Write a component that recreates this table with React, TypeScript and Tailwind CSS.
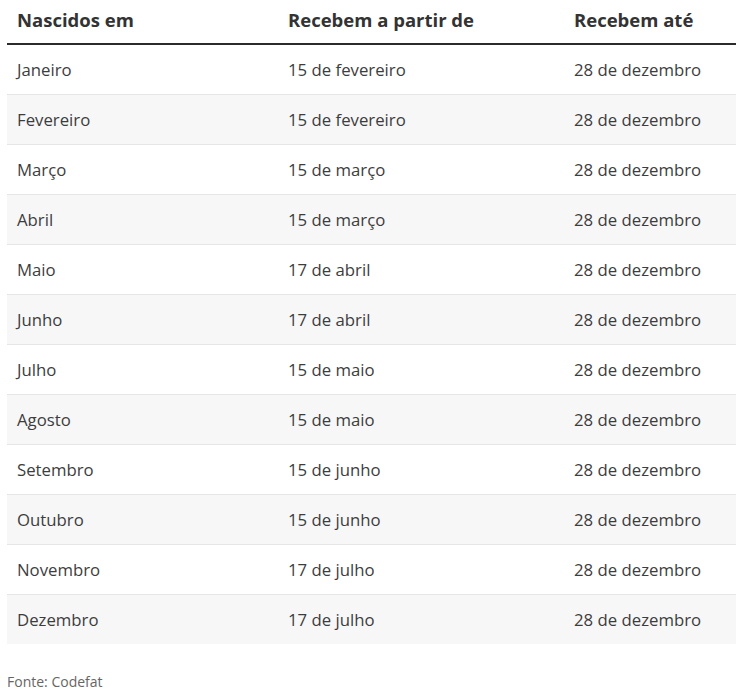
import React from 'react'

const ROWS: [string, string, string][] = [
  ['Janeiro', '15 de fevereiro', '28 de dezembro'],
  ['Fevereiro', '15 de fevereiro', '28 de dezembro'],
  ['Março', '15 de março', '28 de dezembro'],
  ['Abril', '15 de março', '28 de dezembro'],
  ['Maio', '17 de abril', '28 de dezembro'],
  ['Junho', '17 de abril', '28 de dezembro'],
  ['Julho', '15 de maio', '28 de dezembro'],
  ['Agosto', '15 de maio', '28 de dezembro'],
  ['Setembro', '15 de junho', '28 de dezembro'],
  ['Outubro', '15 de junho', '28 de dezembro'],
  ['Novembro', '17 de julho', '28 de dezembro'],
  ['Dezembro', '17 de julho', '28 de dezembro'],
]

export default function App(): React.ReactElement {
  return (
    <div className="min-h-[700px] bg-white pl-[7px] text-[#333] [font-family:'Open_Sans',sans-serif]">
      <table className="w-[729px] table-fixed border-collapse">
        <colgroup>
          <col className="w-[271px]" />
          <col className="w-[286px]" />
          <col className="w-[172px]" />
        </colgroup>
        <thead>
          <tr className="h-[44px] border-b-2 border-[#2b2b2b]">
            <th className="px-[10px] pb-[4px] text-left text-[18.5px] font-bold">Nascidos em</th>
            <th className="px-[10px] pb-[4px] text-left text-[18.5px] font-bold">Recebem a partir de</th>
            <th className="px-[10px] pb-[4px] text-left text-[18.5px] font-bold">Recebem até</th>
          </tr>
        </thead>
        <tbody>
          {ROWS.map((row, i) => (
            <tr key={row[0]} className={`h-[50px] border-b border-[#e6e6e6] last:border-b-0 ${i % 2 === 1 ? 'bg-[#f7f7f7]' : 'bg-white'}`}>
              {row.map((cell, j) => (
                <td key={j} className="px-[10px] pt-[1px] text-[16.75px] text-[#3d3d3d]">{cell}</td>
              ))}
            </tr>
          ))}
        </tbody>
      </table>
      <p className="mt-[27px] text-[14px] text-[#666]">Fonte: Codefat</p>
    </div>
  )
}
